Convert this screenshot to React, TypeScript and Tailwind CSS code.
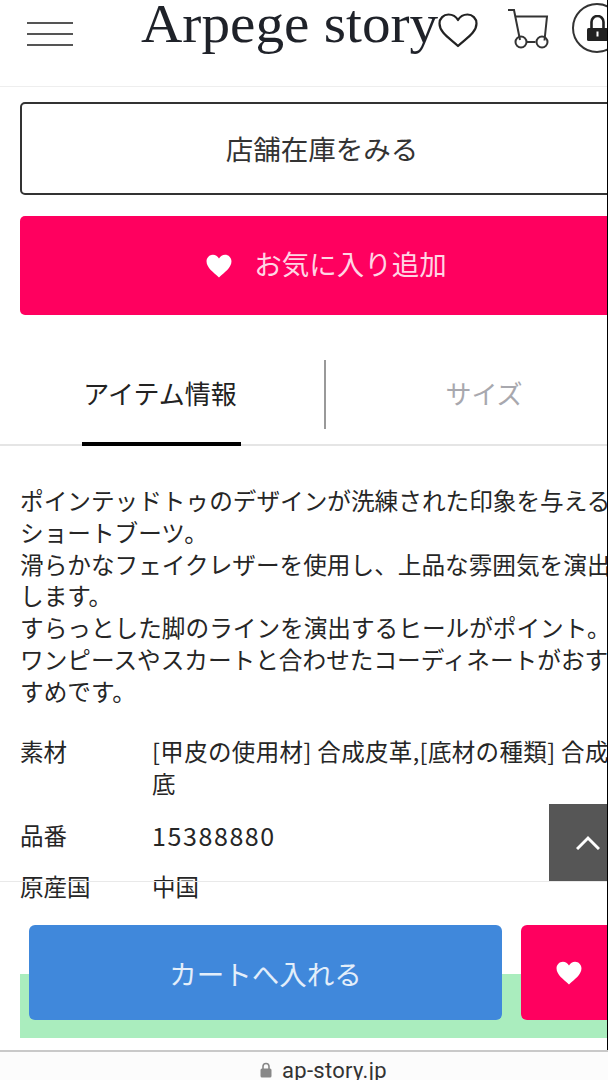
import React from "react";

const jp = "font-['Noto_Sans_CJK_JP','Noto_Sans',sans-serif]";

function Heart({ className }: { className: string }) {
  return (
    <svg viewBox="0 0 24 22" className={className} fill="currentColor">
      <path d="M12 21.5C7 17 .5 12.4.5 6.8.5 3.2 3.2.6 6.4.6c2.3 0 4.4 1.300 5.6 3.400C13.200 1.900 15.300.6 17.600.6c3.200 0 5.900 2.600 5.900 6.200 0 5.600-6.500 10.200-11.500 14.700z" />
    </svg>
  );
}

const description = [
  "ポインテッドトゥのデザインが洗練された印象を与える",
  "ショートブーツ。",
  "滑らかなフェイクレザーを使用し、上品な雰囲気を演出",
  "します。",
  "すらっとした脚のラインを演出するヒールがポイント。",
  "ワンピースやスカートと合わせたコーディネートがおす",
  "すめです。",
];

export default function App() {
  return (
    <div className={`relative w-[608px] h-[1080px] overflow-hidden bg-white text-[#262626] ${jp}`}>
      <div className="w-[650px]">
        <header className="h-[87px] border-b border-[#eeeeee] flex items-start">
          <div className="w-[46px] ml-[27px] mt-[22px] flex flex-col gap-[9px] shrink-0">
            <div className="h-[2px] bg-[#555]" />
            <div className="h-[2px] bg-[#555]" />
            <div className="h-[2px] bg-[#555]" />
          </div>
          <div className="ml-[68px] w-[297px] shrink-0 mt-[-7px] origin-left scale-x-[1.06] font-['Liberation_Serif',serif] text-[54px] leading-[62px] text-[#1f2229] whitespace-nowrap">
            Arpege story
          </div>
          <svg viewBox="0 0 40 35" className="w-[40px] h-[35px] mt-[13px] shrink-0" fill="none" stroke="#222" strokeWidth="2.2" strokeLinejoin="round">
            <path d="M20 33C13 26 1.500 20 1.500 10.500 1.500 5.500 5.500 1.500 10.500 1.500c4 0 7.500 2 9.500 5.500 2-3.500 5.500-5.500 9.500-5.500 5 0 9 4 9 9C38.500 20 27 26 20 33z" />
          </svg>
          <svg viewBox="0 0 42 42" className="w-[42px] h-[42px] ml-[30px] mt-[8px] shrink-0" fill="none" stroke="#333" strokeWidth="2">
            <path d="M0 2h6l6 30" />
            <path d="M7.500 8.500H39l-2.500 24" />
            <path d="M18.500 34h9" />
            <circle cx="13" cy="34" r="5.500" />
            <circle cx="34" cy="34" r="5.500" />
          </svg>
          <div className="relative ml-[22px] mt-[3px] w-[50px] h-[50px] rounded-full border-2 border-[#333] shrink-0">
            <svg viewBox="0 0 21 26" className="absolute left-[13px] top-[10px] w-[21px] h-[26px]">
              <path d="M4.500 13V7a6 6 0 0 1 12 0v6" fill="none" stroke="#222" strokeWidth="2.600" />
              <rect x="0" y="13" width="21" height="13" rx="1.500" fill="#222" />
              <rect x="9.500" y="16.500" width="2" height="5" fill="#fff" />
            </svg>
          </div>
        </header>

        <main className="pt-[15px]">
          <div className="ml-5 h-[93px] w-[604px] rounded-[5px] border-2 border-[#333] flex items-center justify-center">
            <span className="text-[27.5px] leading-none text-[#333] mt-[1px]">店舗在庫をみる</span>
          </div>
          <div className="mt-[21px] ml-5 h-[99px] w-[604px] rounded-[5px] bg-[#ff005f] flex items-center justify-center pl-[9px]">
            <Heart className="w-[26px] h-[24px] mr-[22px] text-white" />
            <span className="text-[27.5px] leading-none text-[#ffd5e4] mb-[3px]">お気に入り追加</span>
          </div>

          <div className="mt-[45px] h-[86px] border-b-2 border-[#e5e5e5] flex">
            <div className="relative w-[324px] shrink-0 flex justify-center pt-[15px] pr-[4px]">
              <span className="text-[26px] leading-[36px] text-[#222]">アイテム情報</span>
              <div className="absolute left-[82px] bottom-[-2px] w-[159px] h-[4px] bg-black" />
            </div>
            <div className="w-[2px] h-[69px] bg-[#999] shrink-0" />
            <div className="w-[316px] shrink-0 flex justify-center pt-[15px]">
              <span className="text-[26px] leading-[36px] text-[#a8a8ae]">サイズ</span>
            </div>
          </div>

          <div className="mt-[39px] ml-5 text-[23.65px] leading-[31.8px] whitespace-nowrap">
            {description.map((l) => (
              <div key={l}>{l}</div>
            ))}
          </div>

          <dl className="mt-[27px] ml-5 text-[23.5px] leading-[32px] whitespace-nowrap">
            <div className="flex">
              <dt className="w-[132px]">素材</dt>
              <dd>
                <div className="tracking-[0.35px]">[甲皮の使用材] 合成皮革,[底材の種類] 合成</div>
                <div>底</div>
              </dd>
            </div>
            <div className="flex mt-[20px]">
              <dt className="w-[132px]">品番</dt>
              <dd className="text-[25px] tracking-[1.6px]">15388880</dd>
            </div>
            <div className="flex mt-[19px]">
              <dt className="w-[132px]">原産国</dt>
              <dd>中国</dd>
            </div>
          </dl>
        </main>
      </div>

      {/* Overlays pinned to the viewport */}
      <div className="absolute left-[549px] top-[804px] w-[59px] h-[78px] bg-[#565656] flex justify-center pt-[31px]">
        <svg viewBox="0 0 24 15" className="w-[24px] h-[15px] ml-[19px] shrink-0" fill="none" stroke="#fff" strokeWidth="3">
          <path d="M1 14L12 3l11 11" />
        </svg>
      </div>

      <div className="absolute left-0 right-0 top-[881px] h-px bg-[#e9e9e9]" />
      <div className="absolute left-0 right-0 top-[899px] h-[151px] bg-white">
        <div className="absolute left-5 right-0 top-[75px] h-[64px] bg-[#aaedbe]" />
        <div className="absolute left-[29px] top-[26px] w-[473px] h-[95px] rounded-[6px] bg-[#4088db] flex items-center justify-center text-[27.5px] leading-none text-[#e3eefa] pt-[3px]">
          カートへ入れる
        </div>
        <div className="absolute left-[521px] top-[26px] w-[100px] h-[95px] rounded-[6px] bg-[#ff005f] text-white">
          <Heart className="absolute left-[35px] top-[36px] w-[26px] h-[24px]" />
        </div>
      </div>

      <div className="absolute left-0 right-0 top-[1050px] h-[30px] bg-[#fcfcfc] border-t-2 border-[#c9c9c9] flex justify-center pt-[6px] pl-[39px]">
        <svg viewBox="0 0 12 16" className="w-[12px] h-[16px] mt-[4px] mr-[10px] shrink-0">
          <path d="M3 7V4.500a3 3 0 0 1 6 0V7" fill="none" stroke="#888" strokeWidth="1.600" />
          <rect x="0.500" y="6.500" width="11" height="9" rx="1.500" fill="#888" />
        </svg>
        <span className="font-['Roboto',sans-serif] text-[22px] leading-[26px] text-[#333] tracking-[0.3px]">ap-story.jp</span>
      </div>

      <div className="absolute right-0 top-0 h-[1050px] w-px bg-black" />
    </div>
  );
}
